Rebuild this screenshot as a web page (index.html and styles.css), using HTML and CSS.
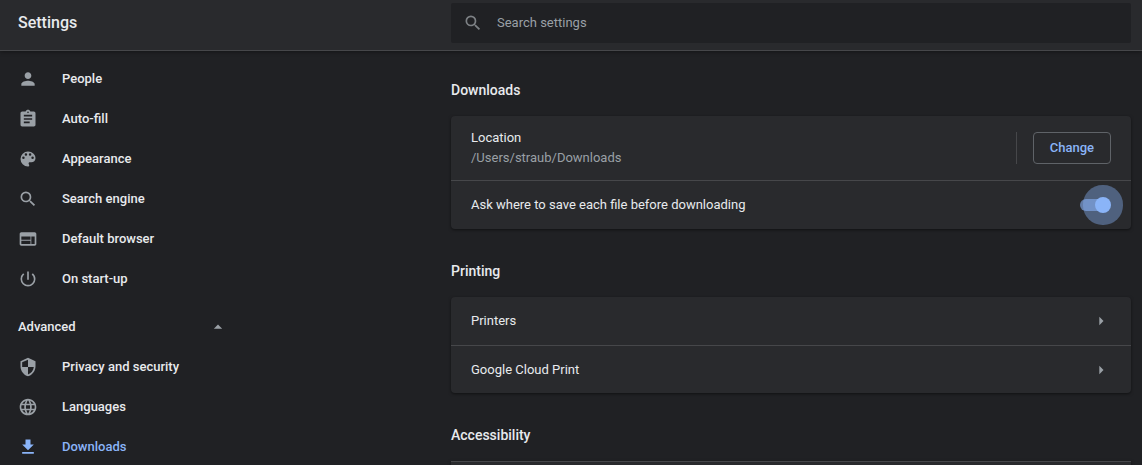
FILE: index.html
```html
<!DOCTYPE html>
<html lang="en-GB">
<head>
<meta charset="utf-8">
<meta name="viewport" content="width=device-width, initial-scale=1">
<title>Settings</title>
<link rel="stylesheet" href="styles.css">
</head>
<body>
<header class="toolbar">
  <h1 class="toolbar-title">Settings</h1>
  <label class="search">
    <svg class="icon" viewBox="0 0 24 24" aria-hidden="true"><path d="M15.5 14h-.79l-.28-.27A6.47 6.47 0 0 0 16 9.5 6.5 6.5 0 1 0 9.5 16c1.61 0 3.09-.59 4.23-1.57l.27.28v.79l5 4.99L20.49 19l-4.99-5zm-6 0C7.01 14 5 11.99 5 9.5S7.01 5 9.5 5 14 7.01 14 9.5 11.99 14 9.5 14z"/></svg>
    <input class="search-input" type="text" placeholder="Search settings" aria-label="Search settings">
  </label>
</header>
<div class="layout">
  <nav class="sidebar" aria-label="Settings">
    <a class="nav-item" href="#people"><svg class="icon" viewBox="0 0 24 24" aria-hidden="true"><path d="M12 12c2.21 0 4-1.79 4-4s-1.79-4-4-4-4 1.790-4 4 1.790 4 4 4zm0 2c-2.670 0-8 1.340-8 4v2h16v-2c0-2.660-5.330-4-8-4z"/></svg>People</a>
    <a class="nav-item" href="#autofill"><svg class="icon" viewBox="0 0 24 24" aria-hidden="true"><path d="M19 3h-4.180C14.400 1.840 13.300 1 12 1s-2.400.840-2.820 2H5c-1.100 0-2 .900-2 2v14c0 1.100.900 2 2 2h14c1.100 0 2-.900 2-2V5c0-1.100-.900-2-2-2zm-7 0c.550 0 1 .450 1 1s-.450 1-1 1-1-.450-1-1 .450-1 1-1zm2 14H7v-2h7v2zm3-4H7v-2h10v2zm0-4H7V7h10v2z"/></svg>Auto-fill</a>
    <a class="nav-item" href="#appearance"><svg class="icon" viewBox="0 0 24 24" aria-hidden="true"><path d="M12 3a9 9 0 0 0 0 18c.830 0 1.500-.670 1.500-1.500 0-.390-.150-.740-.390-1.010-.230-.260-.380-.610-.380-.990 0-.830.670-1.500 1.500-1.500H16c2.760 0 5-2.240 5-5 0-4.420-4.030-8-9-8zm-5.500 9a1.500 1.500 0 1 1 0-3 1.500 1.500 0 0 1 0 3zm3-4a1.500 1.500 0 1 1 0-3 1.500 1.500 0 0 1 0 3zm5 0a1.500 1.500 0 1 1 0-3 1.500 1.500 0 0 1 0 3zm3 4a1.500 1.500 0 1 1 0-3 1.500 1.500 0 0 1 0 3z"/></svg>Appearance</a>
    <a class="nav-item" href="#search"><svg class="icon" viewBox="0 0 24 24" aria-hidden="true"><path d="M15.5 14h-.79l-.28-.27A6.47 6.47 0 0 0 16 9.5 6.5 6.5 0 1 0 9.5 16c1.61 0 3.09-.59 4.23-1.57l.27.28v.79l5 4.99L20.49 19l-4.99-5zm-6 0C7.01 14 5 11.99 5 9.5S7.01 5 9.5 5 14 7.01 14 9.5 11.99 14 9.5 14z"/></svg>Search engine</a>
    <a class="nav-item" href="#browser"><svg class="icon" viewBox="0 0 24 24" aria-hidden="true"><path d="M20 4H4c-1.100 0-1.990.900-1.990 2L2 18c0 1.100.900 2 2 2h16c1.100 0 2-.900 2-2V6c0-1.100-.900-2-2-2zm-5 14H4v-4h11v4zm0-5H4V9h11v4zm5 5h-4V9h4v9z"/></svg>Default browser</a>
    <a class="nav-item" href="#startup"><svg class="icon" viewBox="0 0 24 24" aria-hidden="true"><path d="M13 3h-2v10h2V3zm4.830 2.170l-1.420 1.420A6.920 6.920 0 0 1 19 12a7 7 0 1 1-11.420-5.420L6.170 5.170A8.930 8.930 0 0 0 3 12a9 9 0 0 0 18 0c0-2.740-1.230-5.180-3.170-6.830z"/></svg>On start-up</a>
    <button class="advanced" type="button" aria-expanded="true">Advanced<svg class="icon" viewBox="0 0 24 24" aria-hidden="true"><path d="M7 14l5-5 5 5z"/></svg></button>
    <a class="nav-item" href="#privacy"><svg class="icon" viewBox="0 0 24 24" aria-hidden="true"><path d="M12 1L3 5v6c0 5.550 3.840 10.740 9 12 5.160-1.260 9-6.450 9-12V5l-9-4zm0 10.990h7c-.530 4.120-3.280 7.790-7 8.940V12H5V6.300l7-3.110v8.800z"/></svg>Privacy and security</a>
    <a class="nav-item" href="#languages"><svg class="icon" viewBox="0 0 24 24" aria-hidden="true"><path d="M11.990 2C6.470 2 2 6.480 2 12s4.470 10 9.990 10C17.520 22 22 17.520 22 12S17.520 2 11.990 2zm6.930 6h-2.950a15.650 15.650 0 0 0-1.380-3.560A8.030 8.030 0 0 1 18.920 8zM12 4.040c.830 1.200 1.480 2.530 1.910 3.960h-3.820c.430-1.430 1.080-2.760 1.910-3.960zM4.260 14C4.100 13.360 4 12.690 4 12s.100-1.360.260-2h3.380a16.520 16.520 0 0 0 0 4H4.260zm.820 2h2.950c.320 1.250.780 2.450 1.380 3.560A7.987 7.987 0 0 1 5.080 16zm2.950-8H5.080a7.987 7.987 0 0 1 4.330-3.560A15.650 15.650 0 0 0 8.030 8zM12 19.960c-.830-1.200-1.480-2.530-1.910-3.960h3.820c-.430 1.430-1.080 2.760-1.910 3.960zM14.340 14H9.660a14.710 14.710 0 0 1 0-4h4.680a14.710 14.710 0 0 1 0 4zm.250 5.560c.600-1.110 1.060-2.310 1.380-3.560h2.950a8.030 8.030 0 0 1-4.330 3.560zM16.360 14a16.520 16.520 0 0 0 0-4h3.380c.160.640.260 1.310.260 2s-.100 1.360-.260 2h-3.380z"/></svg>Languages</a>
    <a class="nav-item is-selected" href="#downloads" aria-current="page"><svg class="icon" viewBox="0 0 24 24" aria-hidden="true"><path d="M19 9h-4V3H9v6H5l7 7 7-7zM5 18v2h14v-2H5z"/></svg>Downloads</a>
  </nav>
  <main class="content">
    <section id="downloads">
      <h2 class="section-title">Downloads</h2>
      <div class="card">
        <div class="row row-location">
          <div class="row-text">
            <div>Location</div>
            <div class="secondary">/Users/straub/Downloads</div>
          </div>
          <div class="row-action"><button class="button" type="button">Change</button></div>
        </div>
        <label class="row row-toggle">
          <span class="row-text">Ask where to save each file before downloading</span>
          <input class="toggle" type="checkbox" role="switch" checked>
        </label>
      </div>
    </section>
    <section>
      <h2 class="section-title">Printing</h2>
      <div class="card">
        <a class="row" href="#printers"><span class="row-text">Printers</span><svg class="icon" viewBox="0 0 24 24" aria-hidden="true"><path d="M10 7l5 5-5 5z"/></svg></a>
        <a class="row" href="#cloudprint"><span class="row-text">Google Cloud Print</span><svg class="icon" viewBox="0 0 24 24" aria-hidden="true"><path d="M10 7l5 5-5 5z"/></svg></a>
      </div>
    </section>
    <section>
      <h2 class="section-title">Accessibility</h2>
      <div class="card card-continued"></div>
    </section>
  </main>
</div>
</body>
</html>
```
FILE: styles.css
```css
* {
  box-sizing: border-box;
}

html {
  height: 100%;
}

body {
  display: flex;
  flex-direction: column;
  height: 100%;
  margin: 0;
  overflow: hidden;
  background: #202124;
  color: #e8eaed;
  font: 13px/20px Roboto, sans-serif;
}

h1,
h2 {
  margin: 0;
}

a {
  color: inherit;
  text-decoration: none;
}

.icon {
  flex: none;
  width: 20px;
  height: 20px;
  fill: #9aa0a6;
}

.toolbar,
.layout {
  display: grid;
  grid-template-columns: 451px minmax(0, 1fr);
  padding-right: 11px;
}

.toolbar {
  position: relative;
  flex: none;
  padding-top: 3px;
  padding-bottom: 7px;
  border-bottom: 1px solid #46474a;
  background: #292a2d;
  box-shadow: 0 1px 4px rgba(0, 0, 0, 0.4);
}

.toolbar-title {
  align-self: center;
  padding-left: 18px;
  font-size: 16px;
  font-weight: 500;
}

.search {
  display: flex;
  align-items: center;
  gap: 14px;
  height: 40px;
  padding: 0 12px;
  border-radius: 2px;
  background: #202124;
}

.search .icon {
  fill: #7d8185;
}

.search-input {
  flex: 1;
  min-width: 0;
  padding: 0;
  border: 0;
  outline: 0;
  background: transparent;
  color: #e8eaed;
  font: inherit;
}

.search-input::placeholder {
  color: #9aa0a6;
  opacity: 1;
}

.layout {
  flex: 1;
  min-height: 0;
  overflow: hidden;
}

.sidebar {
  width: 240px;
  padding-top: 8px;
  font-weight: 500;
}

.nav-item {
  display: flex;
  align-items: center;
  gap: 24px;
  height: 40px;
  padding-left: 18px;
}

.nav-item.is-selected,
.nav-item.is-selected .icon {
  color: #8ab4f8;
  fill: #8ab4f8;
}

.advanced {
  display: flex;
  align-items: center;
  justify-content: space-between;
  width: 100%;
  height: 40px;
  margin-top: 8px;
  padding: 0 12px 0 18px;
  border: 0;
  background: transparent;
  color: inherit;
  font: inherit;
}

.section-title {
  padding: 32px 0 16px;
  font-size: 14px;
  font-weight: 500;
}

.content section:first-child .section-title {
  padding-top: 29px;
}

.card {
  border-radius: 4px;
  background: #292a2d;
  box-shadow: 0 1px 3px rgba(0, 0, 0, 0.5);
}

.card-continued {
  height: 48px;
  border-top: 1px solid #46474a;
  border-radius: 0;
}

.row {
  display: flex;
  align-items: center;
  height: 48px;
  padding: 0 20px;
}

.row + .row {
  border-top: 1px solid #46474a;
}

.row-location {
  height: 64px;
}

.row-toggle {
  height: 49px;
}

.row-text {
  flex: 1;
}

.secondary {
  color: #9aa0a6;
}

.row-action {
  padding-left: 16px;
  border-left: 1px solid #46474a;
}

.button {
  display: block;
  height: 32px;
  padding: 0 16px;
  border: 1px solid #5f6368;
  border-radius: 4px;
  background: transparent;
  color: #8ab4f8;
  font: inherit;
  font-weight: 500;
}

.toggle {
  position: relative;
  width: 32px;
  height: 16px;
  margin: 0;
  appearance: none;
}

.toggle::before {
  position: absolute;
  inset: 2px 4px 2px 1px;
  border-radius: 6px;
  background: rgba(138, 180, 248, 0.6);
  content: "";
}

.toggle::after {
  position: absolute;
  top: 0;
  right: 0;
  width: 16px;
  height: 16px;
  border-radius: 50%;
  background: #8ab4f8;
  box-shadow: 0 0 0 12px rgba(138, 180, 248, 0.4);
  content: "";
}
```
